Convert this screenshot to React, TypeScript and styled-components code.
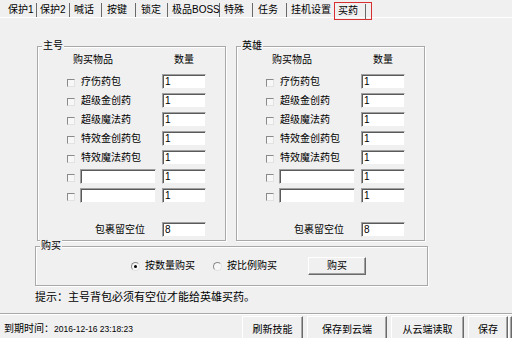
import React from 'react';
import styled, { createGlobalStyle } from 'styled-components';

const Global = createGlobalStyle`
  html, body { margin: 0; padding: 0; background: #f0f0f0; }
  body {
    font-family: "Liberation Sans", "Noto Sans CJK SC", sans-serif;
    font-size: 10px;
    color: #000;
  }
  * { box-sizing: border-box; }
`;

const Window = styled.div`
  width: 512px;
  height: 338px;
  display: flex;
  flex-direction: column;
  background: #f0f0f0;
  overflow: hidden;
`;

const TabBar = styled.div`
  height: 18px;
  flex-shrink: 0;
  display: flex;
  align-items: flex-start;
  border-bottom: 1px solid #ffffff;
`;

const Tab = styled.div<{ $w: number; $pl: number; $sep?: boolean }>`
  width: ${p => p.$w}px;
  padding-left: ${p => p.$pl}px;
  margin-top: 3px;
  height: 14px;
  line-height: 14px;
  white-space: nowrap;
  border-right: 1px solid ${p => (p.$sep === false ? 'transparent' : '#6a6a6a')};
`;

const ActiveBox = styled.div`
  margin-top: 2px;
  height: 18px;
  padding: 0 5px 0 3px;
  border: 1px solid #d83030;
  display: flex;
  position: relative;
  z-index: 1;
`;

const ActiveTab = styled.div`
  width: 28px;
  margin-top: 1px;
  height: 15px;
  line-height: 13px;
  border-right: 1px solid #6a6a6a;
  white-space: nowrap;
`;

const Body = styled.div`
  flex: 1;
  display: flex;
  flex-direction: column;
  padding: 28px 0 0 35px;
`;

const GroupsRow = styled.div`
  display: flex;
  gap: 10px;
  padding-left: 2px;
`;

const Group = styled.div<{ $w: number }>`
  position: relative;
  width: ${p => p.$w}px;
  border: 1px solid #a9a9a9;
  box-shadow: inset 1px 1px 0 #ffffff, 1px 1px 0 #ffffff;
`;

const Legend = styled.span`
  position: absolute;
  top: -8px;
  left: 4px;
  padding: 0 1px;
  line-height: 14px;
  background: #f0f0f0;
`;

const ItemsBody = styled.div`
  padding: 6px 0 3px 29px;
  display: flex;
  flex-direction: column;
`;

const HeaderRow = styled.div`
  display: flex;
  height: 14px;
  line-height: 14px;
  margin-bottom: 7px;
`;

const HeaderName = styled.div`
  width: 89px;
  padding-left: 6px;
`;

const HeaderQty = styled.div`
  width: 44px;
  margin-left: 6px;
  text-align: center;
`;

const Rows = styled.div`
  display: flex;
  flex-direction: column;
  gap: 4px;
`;

const Row = styled.div`
  display: flex;
  align-items: center;
  height: 15px;
`;

const Check = styled.span`
  width: 8px;
  height: 8px;
  margin-top: 2px;
  margin-right: 5px;
  flex-shrink: 0;
  border-style: solid;
  border-width: 1px;
  border-color: #8a8a8a #e2e2e2 #e2e2e2 #8a8a8a;
  background: #f7f7f7;
`;

const ItemLabel = styled.div`
  width: 76px;
  padding-left: 1px;
  margin-right: 6px;
  white-space: nowrap;
  line-height: 15px;
`;

const Field = styled.input<{ $w: number }>`
  width: ${p => p.$w}px;
  height: 15px;
  margin: 0;
  padding: 0 0 0 2px;
  font-family: "Liberation Sans", sans-serif;
  font-size: 10px;
  color: #000;
  background: #ffffff;
  border-style: solid;
  border-width: 1px;
  border-color: #a0a0a0 #f0f0f0 #f0f0f0 #a0a0a0;
  box-shadow: inset 1px 1px 0 #5a5a5a;
  outline: none;
`;

const NameField = styled(Field)`
  margin-right: 6px;
`;

const FooterRow = styled.div`
  display: flex;
  align-items: center;
  height: 15px;
  margin-top: 19px;
`;

const FooterLabel = styled.div`
  width: 89px;
  padding-right: 11px;
  margin-right: 6px;
  text-align: right;
  line-height: 15px;
`;

const BuyGroup = styled(Group)`
  margin-top: 5px;
  height: 40px;
  display: flex;
  align-items: center;
  padding-left: 95px;
`;

const Radio = styled.span<{ $on?: boolean }>`
  position: relative;
  width: 9px;
  height: 9px;
  border-radius: 50%;
  flex-shrink: 0;
  border-style: solid;
  border-width: 1px;
  border-color: #8a8a8a #e2e2e2 #e2e2e2 #8a8a8a;
  background: #f7f7f7;
  margin-right: 5px;
  &::after {
    content: '';
    display: ${p => (p.$on ? 'block' : 'none')};
    position: absolute;
    left: 2px;
    top: 2px;
    width: 3px;
    height: 3px;
    border-radius: 50%;
    background: #000;
  }
`;

const RadioLabel = styled.span<{ $mr: number }>`
  margin-right: ${p => p.$mr}px;
  white-space: nowrap;
  line-height: 14px;
`;

const PushButton = styled.div`
  width: 58px;
  height: 18px;
  line-height: 15px;
  text-align: center;
  border-style: solid;
  border-width: 1px;
  border-color: #ffffff #6a6a6a #6a6a6a #ffffff;
  box-shadow: inset -1px -1px 0 #a0a0a0;
`;

const Hint = styled.div`
  margin-top: 4px;
  font-size: 11px;
  line-height: 14px;
  white-space: nowrap;
`;

const StatusBar = styled.div`
  height: 25px;
  flex-shrink: 0;
  display: flex;
  border-top: 1px solid #a8a8a8;
  box-shadow: inset 0 1px 0 #ffffff;
`;

const Expire = styled.div`
  flex: 1;
  padding: 8px 0 0 4px;
  line-height: 14px;
  white-space: nowrap;
`;

const DateText = styled.span`
  font-family: "Liberation Sans", sans-serif;
  font-size: 8.5px;
`;

const BarButton = styled.div<{ $w: number; $ml: number }>`
  width: ${p => p.$w}px;
  margin-left: ${p => p.$ml}px;
  margin-top: 2px;
  padding-top: 6px;
  line-height: 14px;
  text-align: center;
  white-space: nowrap;
  border-left: 1px solid #ffffff;
  border-top: 1px solid #ffffff;
  border-right: 1px solid #6a6a6a;
  box-shadow: inset -1px 0 0 #a8a8a8;
`;

const tabs = [
  { t: '保护1', w: 37, pl: 8 },
  { t: '保护2', w: 33, pl: 3 },
  { t: '喊话', w: 32, pl: 4 },
  { t: '按键', w: 34, pl: 5 },
  { t: '锁定', w: 32, pl: 5 },
  { t: '极品BOSS', w: 52, pl: 4 },
  { t: '特殊', w: 33, pl: 4 },
  { t: '任务', w: 34, pl: 5 },
  { t: '挂机设置', w: 47, pl: 4, sep: false },
];

const items = ['疗伤药包', '超级金创药', '超级魔法药', '特效金创药包', '特效魔法药包'];

function ItemGroup({ title }: { title: string }) {
  return (
    <Group $w={189}>
      <Legend>{title}</Legend>
      <ItemsBody>
        <HeaderRow>
          <HeaderName>购买物品</HeaderName>
          <HeaderQty>数量</HeaderQty>
        </HeaderRow>
        <Rows>
          {items.map(it => (
            <Row key={it}>
              <Check />
              <ItemLabel>{it}</ItemLabel>
              <Field $w={44} readOnly value="1" />
            </Row>
          ))}
          {[0, 1].map(i => (
            <Row key={'e' + i}>
              <Check />
              <NameField $w={76} readOnly value="" />
              <Field $w={44} readOnly value="1" />
            </Row>
          ))}
        </Rows>
        <FooterRow>
          <FooterLabel>包裹留空位</FooterLabel>
          <Field $w={44} readOnly value="8" />
        </FooterRow>
      </ItemsBody>
    </Group>
  );
}

export default function App() {
  return (
    <>
      <Global />
      <Window>
        <TabBar>
          {tabs.map(t => (
            <Tab key={t.t} $w={t.w} $pl={t.pl} $sep={t.sep}>
              {t.t}
            </Tab>
          ))}
          <ActiveBox>
            <ActiveTab>买药</ActiveTab>
          </ActiveBox>
        </TabBar>
        <Body>
          <GroupsRow>
            <ItemGroup title="主号" />
            <ItemGroup title="英雄" />
          </GroupsRow>
          <BuyGroup $w={393}>
            <Legend>购买</Legend>
            <Radio $on />
            <RadioLabel $mr={18}>按数量购买</RadioLabel>
            <Radio />
            <RadioLabel $mr={31}>按比例购买</RadioLabel>
            <PushButton>购买</PushButton>
          </BuyGroup>
          <Hint>提示：主号背包必须有空位才能给英雄买药。</Hint>
        </Body>
        <StatusBar>
          <Expire>
            到期时间：<DateText>2016-12-16 23:18:23</DateText>
          </Expire>
          <BarButton $w={61} $ml={0}>刷新技能</BarButton>
          <BarButton $w={80} $ml={4}>保存到云端</BarButton>
          <BarButton $w={73} $ml={4}>从云端读取</BarButton>
          <BarButton $w={40} $ml={4}>保存</BarButton>
          <BarButton $w={4} $ml={0} />
        </StatusBar>
      </Window>
    </>
  );
}
